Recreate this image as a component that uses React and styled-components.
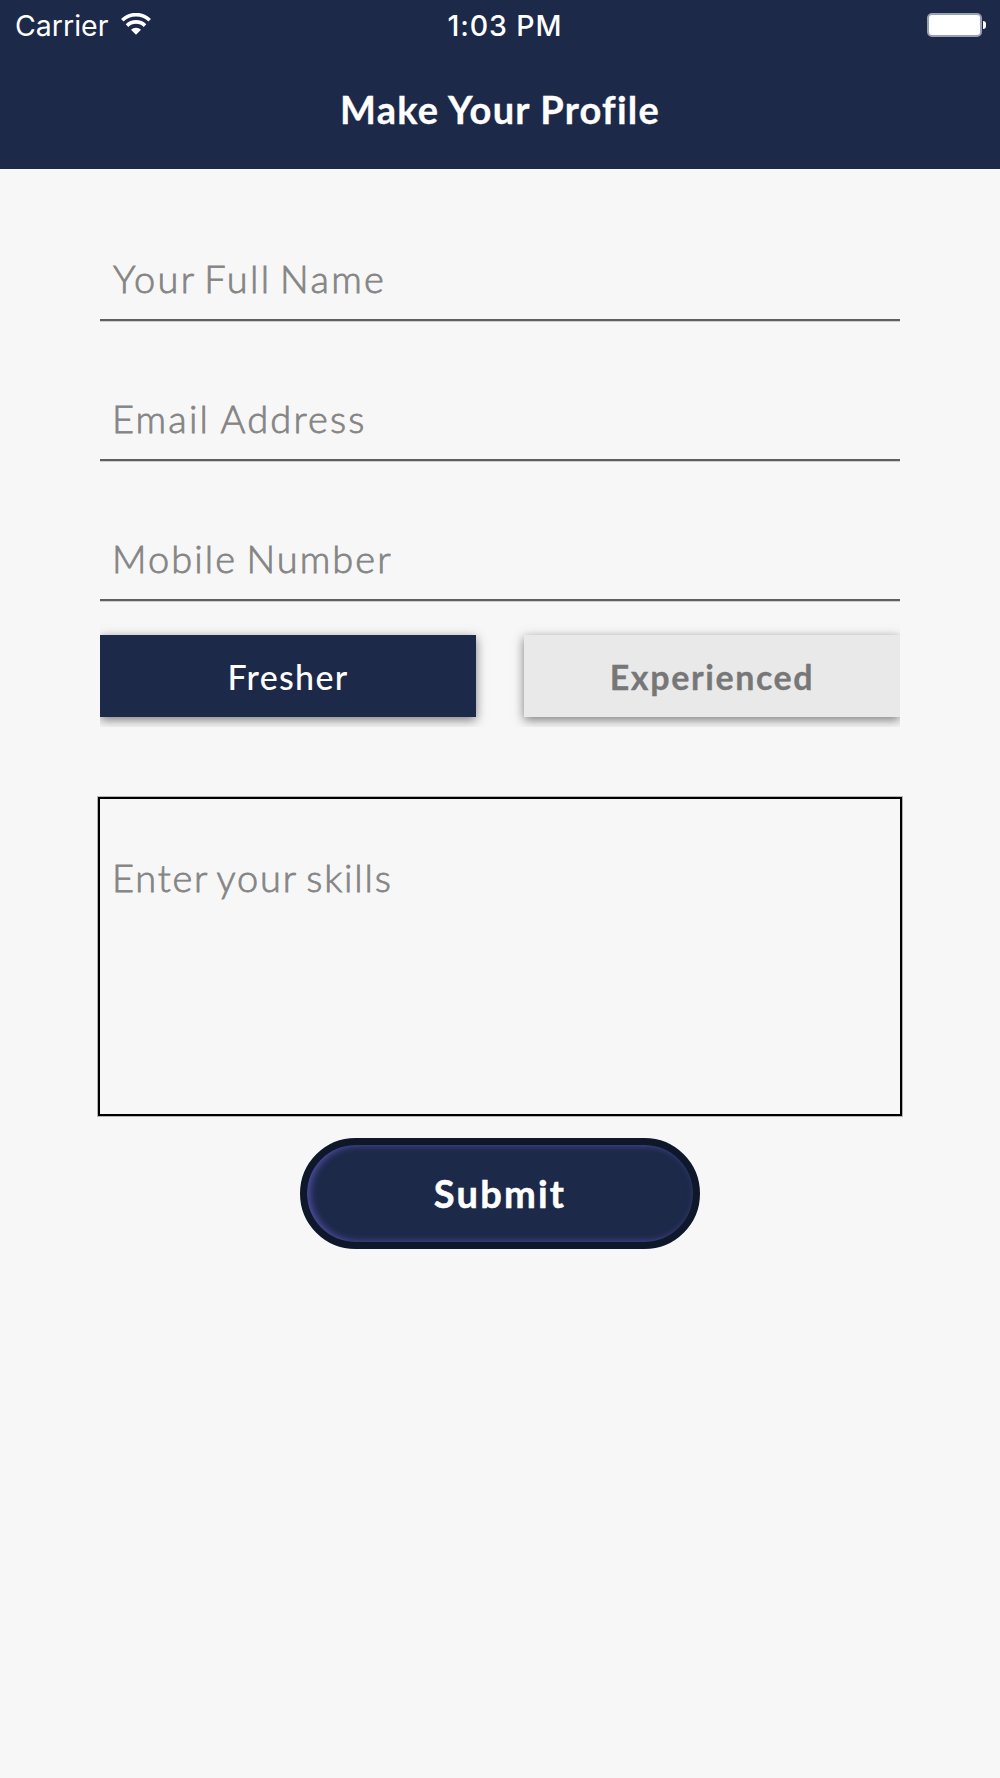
import styled, { createGlobalStyle } from 'styled-components';

const fields = [
  { label: 'Your Full Name', spacing: '2.35px', gap: '-4px', indent: '13px' },
  { label: 'Email Address', spacing: '2.2px', gap: '-1px', indent: '12px' },
  { label: 'Mobile Number', spacing: '2.05px', gap: '-3px', indent: '12px' },
];

const App = () => {
  return (
    <Screen>
      <GlobalStyle />
      <Header>
        <StatusBar>
          <Carrier>
            <span>Carrier</span>
            <Wifi />
          </Carrier>
          <Time>1:03 PM</Time>
          <BatteryWrap>
            <Battery />
            <BatteryTip />
          </BatteryWrap>
        </StatusBar>
        <Title>Make Your Profile</Title>
      </Header>
      <Form>
        {fields.map((field) => (
          <Field key={field.label} $indent={field.indent}>
            <Placeholder $spacing={field.spacing} $gap={field.gap}>{field.label}</Placeholder>
          </Field>
        ))}
        <Toggle>
          <ToggleButton $active>Fresher</ToggleButton>
          <ToggleButton>Experienced</ToggleButton>
        </Toggle>
        <Skills>
          <Placeholder $spacing='1.8px' $gap='-3px'>Enter your skills</Placeholder>
        </Skills>
        <Submit>Submit</Submit>
      </Form>
    </Screen>
  );
};

const Wifi = () => (
  <svg width='30' height='22' viewBox='0 0 30 22' fill='none' stroke='white'>
    <path d='M1.3 7.2 A19.6 19.6 0 0 1 28.7 7.2' strokeWidth='3.6' />
    <path d='M6 12.6 A12.8 12.8 0 0 1 24 12.6' strokeWidth='3.6' />
    <path d='M10 16.8 A7.2 7.2 0 0 1 20 16.8 L15 21.8 Z' fill='white' stroke='none' />
  </svg>
);

const GlobalStyle = createGlobalStyle`
  * {
    box-sizing: border-box;
  }

  body {
    margin: 0;
    background-color: #f7f7f7;
    font-family: Lato, 'Open Sans', sans-serif;
  }

  button {
    font-family: inherit;
    padding: 0;
  }
`;

const Screen = styled.div`
  min-height: 1778px;
  background-color: #f7f7f7;
`;

const Header = styled.header`
  height: 169px;
  background-color: #1d2949;
  color: white;
`;

const StatusBar = styled.div`
  display: grid;
  grid-template-columns: 1fr auto 1fr;
  align-items: center;
  height: 50px;
  padding: 0 14px 0 15px;
  font-family: Inter, sans-serif;
  font-size: 28.5px;
`;

const Carrier = styled.div`
  display: flex;
  align-items: center;
  gap: 13px;

  svg {
    margin-top: -3px;
  }
`;

const Time = styled.div`
  font-weight: 500;
  letter-spacing: 0.9px;
  margin-left: 9px;
`;

const BatteryWrap = styled.div`
  display: flex;
  align-items: center;
  justify-content: flex-end;
  gap: 1px;
`;

const Battery = styled.div`
  width: 55px;
  height: 24px;
  border: 2px solid #99a0b2;
  border-radius: 5px;
  background-color: white;
`;

const BatteryTip = styled.div`
  width: 3px;
  height: 8px;
  border-radius: 0 4px 4px 0;
  background-color: white;
`;

const Title = styled.h1`
  display: flex;
  align-items: center;
  justify-content: center;
  height: 119px;
  margin: 0;
  padding: 0 0 2px;
  font-size: 38px;
  font-weight: 700;
  letter-spacing: 1.2px;
  -webkit-text-stroke: 0.3px white;
`;

const Form = styled.div`
  display: flex;
  flex-direction: column;
  width: 800px;
  margin: 0 auto;
  padding-top: 12px;
`;

const Field = styled.div`
  display: flex;
  align-items: flex-end;
  height: 140px;
  padding: 0 0 17px ${(props) => props.$indent};
  border-bottom: 2px solid #605e5f;
  box-shadow: 0 1px 0 #cfcfcf;
`;

const Placeholder = styled.span`
  font-size: 38px;
  font-weight: 300;
  line-height: 48px;
  letter-spacing: ${(props) => props.$spacing};
  word-spacing: ${(props) => props.$gap};
  color: #858585;
  -webkit-text-stroke: 0.8px #858585;
`;

/* the shadows are cut off at the edges of this row */
const Toggle = styled.div`
  display: flex;
  gap: 48px;
  padding: 34px 0 10px;
  overflow: hidden;
`;

const ToggleButton = styled.button`
  flex: 1;
  height: 82px;
  border: none;
  font-size: 34px;
  font-weight: ${(props) => (props.$active ? 500 : 700)};
  letter-spacing: ${(props) => (props.$active ? '1.3px' : '1.6px')};
  color: ${(props) => (props.$active ? 'white' : '#777777')};
  background-color: ${(props) => (props.$active ? '#1d2949' : '#e9e9e9')};
  box-shadow: 0 3px 10px rgba(0, 0, 0, 0.5);
  -webkit-text-stroke: ${(props) => (props.$active ? '0' : '0.3px')};
`;

const Skills = styled.div`
  height: 319px;
  margin: 70px -2px 0;
  padding: 54px 0 0 12px;
  border: 2px solid black;
  box-shadow: 0 0 0 1px #b4b4b4;
`;

const Submit = styled.button`
  align-self: center;
  width: 400px;
  height: 111px;
  margin-top: 22px;
  padding: 0 0 1px;
  border: 7px solid #0f182a;
  border-radius: 56px;
  font-size: 38px;
  font-weight: 700;
  letter-spacing: 2.2px;
  color: white;
  background-color: #1d2949;
  box-shadow: inset 3px 0 7px #5250a8;
  -webkit-text-stroke: 0.5px white;
`;

export default App;
